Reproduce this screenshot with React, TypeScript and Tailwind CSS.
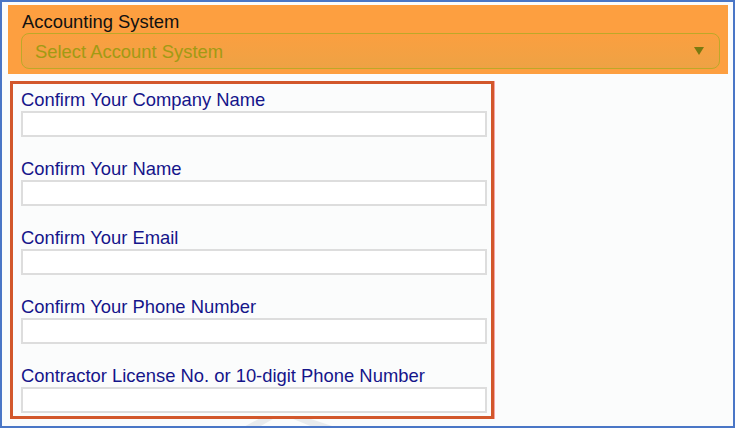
import React from 'react';

const FIELDS = [
  'Confirm Your Company Name',
  'Confirm Your Name',
  'Confirm Your Email',
  'Confirm Your Phone Number',
  'Contractor License No. or 10-digit Phone Number',
];

export default function App() {
  return (
    <div
      className="relative w-[735px] h-[428px] overflow-hidden border-2 border-[#4a76c6] bg-[#fbfcfc] text-[18.4px] leading-[22px]"
      style={{ fontFamily: '"Liberation Sans", Arial, sans-serif' }}
    >
      {/* faint watermark behind the form */}
      <svg className="absolute left-0 top-0" width="735" height="428" viewBox="0 0 735 428">
        <polygon points="236,428 262,414 276,414 252,428" fill="#e9ebed" />
        <polygon points="284,414 300,414 342,428 318,428" fill="#e9ebed" />
      </svg>

      <div className="relative flex flex-col pt-[3px] pl-[6px]">
        {/* Accounting system panel */}
        <div className="w-[720px] h-[69px] bg-[#fd9f40] pt-[6px]">
          <div className="pl-[14px] text-[#111]">Accounting System</div>
          <div className="ml-[13px] w-[699px] h-[36px] rounded-[8px] border border-[#bda828] bg-gradient-to-b from-[#fb9f40] to-[#eea244] flex items-center justify-between pl-[13px] pr-[15px]">
            <span className="text-[#a29a14] pt-[1px]">Select Account System</span>
            <svg width="10" height="8" viewBox="0 0 10 8">
              <polygon points="0,0 10,0 5,8" fill="#7a7a10" />
            </svg>
          </div>
        </div>

        {/* Confirmation form */}
        <div className="ml-[2px] mt-[7px] w-[484px] h-[338px] border-[3px] border-[#d2572b] shadow-[1px_0_0_#f6a3a3] pt-[5px] pl-[8px] pr-[4px] flex flex-col gap-[21px]">
          {FIELDS.map((f) => (
            <div key={f} className="flex flex-col">
              <label className="text-[#15158a]">{f}</label>
              <div className="h-[26px] bg-white border-2 border-[#dddddd]" />
            </div>
          ))}
        </div>
      </div>
    </div>
  );
}
